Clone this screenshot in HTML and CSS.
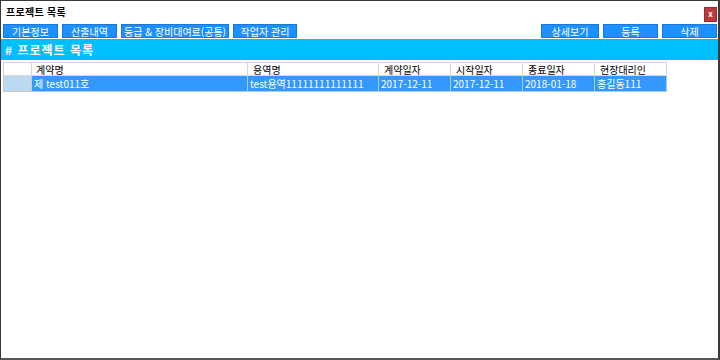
FILE: index.html
```html
<!DOCTYPE html>
<html lang="ko">
<head>
<meta charset="utf-8">
<link rel="stylesheet" href="styles.css">
</head>
<body>
<div class="window">
  <div class="titlebar">
    <span class="title">프로젝트 목록</span>
    <span class="close">x</span>
  </div>
  <div class="toolbar">
    <div class="group">
      <button class="btn w54">기본정보</button>
      <button class="btn w54">산출내역</button>
      <button class="btn w107">등급 &amp; 장비대여료(공통)</button>
      <button class="btn w63">작업자 관리</button>
    </div>
    <div class="group">
      <button class="btn w58">상세보기</button>
      <button class="btn w54">등록</button>
      <button class="btn w54">삭제</button>
    </div>
  </div>
  <div class="section"># 프로젝트 목록</div>
  <div class="grid">
    <div class="row head">
      <div class="cell rh"></div>
      <div class="cell c1">계약명</div>
      <div class="cell c2">용역명</div>
      <div class="cell c3">계약일자</div>
      <div class="cell c3">시작일자</div>
      <div class="cell c3">종료일자</div>
      <div class="cell c3">현장대리인</div>
    </div>
    <div class="row sel">
      <div class="cell rh"></div>
      <div class="cell c1">제 test011호</div>
      <div class="cell c2">test용역11111111111111</div>
      <div class="cell c3">2017-12-11</div>
      <div class="cell c3">2017-12-11</div>
      <div class="cell c3">2018-01-18</div>
      <div class="cell c3">홍길동111</div>
    </div>
  </div>
</div>
</body>
</html>
```
FILE: styles.css
```css
html, body {
  margin: 0;
  padding: 0;
  background: #ffffff;
}
body {
  font-family: "Noto Sans CJK KR", "Noto Sans", sans-serif;
  font-size: 10px;
  color: #000;
}
.window {
  width: 720px;
  height: 360px;
  box-sizing: border-box;
  border-top: 1px solid #3a3a3a;
  border-left: 1px solid #3a3a3a;
  border-right: 2px solid #3a3a3a;
  border-bottom: 2px solid #555;
  background: #fff;
  display: flex;
  flex-direction: column;
}
.titlebar {
  height: 22px;
  display: flex;
  align-items: center;
  justify-content: space-between;
  padding: 0 1px 0 5px;
}
.title {
  font-size: 10px;
  font-weight: bold;
  letter-spacing: 0.3px;
  margin-top: -2px;
}
.close {
  width: 11px;
  height: 13px;
  background: #b83a3c;
  border: 1px solid #9a2a2a;
  color: #fff;
  font-size: 8px;
  font-weight: bold;
  line-height: 12px;
  text-align: center;
  margin-top: 4px;
  box-sizing: content-box;
}
.toolbar {
  height: 14px;
  margin-top: 1px;
  display: flex;
  justify-content: space-between;
  padding: 0 1px 0 2px;
}
.group {
  display: flex;
  gap: 4px;
}
.btn {
  height: 14px;
  margin: 0;
  padding: 0;
  box-sizing: border-box;
  background: #1e8fff;
  border: 1px solid #1a78d6;
  color: #fff;
  font-family: "Noto Sans CJK KR", "Noto Sans", sans-serif;
  font-size: 10px;
  line-height: 11px;
  text-align: center;
}
.w54 { width: 55px; }
.w58 { width: 58px; }
.w63 { width: 64px; }
.w107 { width: 108px; }
.section {
  height: 21px;
  margin-top: 1px;
  background: #00bfff;
  color: #fff;
  font-weight: bold;
  font-size: 12px;
  line-height: 21px;
  padding-left: 4px;
  letter-spacing: 1px;
}
.grid {
  margin: 2px 0 0 2px;
  display: flex;
  flex-direction: column;
}
.row {
  display: flex;
}
.cell {
  box-sizing: border-box;
  border-right: 1px solid #d8d8d8;
  border-bottom: 1px solid #d8d8d8;
  padding-left: 3px;
  white-space: nowrap;
  overflow: hidden;
}
.head .cell {
  height: 14px;
  line-height: 13px;
  background: #fff;
  border-top: 1px solid #d0d0d0;
}
.head .rh {
  border-left: 1px solid #d0d0d0;
}
.rh { width: 29px; }
.c1 { width: 216px; }
.c2 { width: 131px; }
.c3 { width: 72px; }
.head .c1 { padding-left: 4px; }
.head .c2 { padding-left: 5px; }
.head .c3 { padding-left: 5px; }
.sel .cell {
  height: 16px;
  line-height: 15px;
  background: #3399ff;
  color: #fff;
  border-right: 1px solid #a8ccf0;
  border-bottom: 1px solid #a8ccf0;
  padding-left: 2px;
}
.sel .rh {
  background: #bcd9f2;
  border-left: 1px solid #c8c8c8;
  border-right: 1px solid #c8c8c8;
  border-bottom: 1px solid #c8c8c8;
}
```
